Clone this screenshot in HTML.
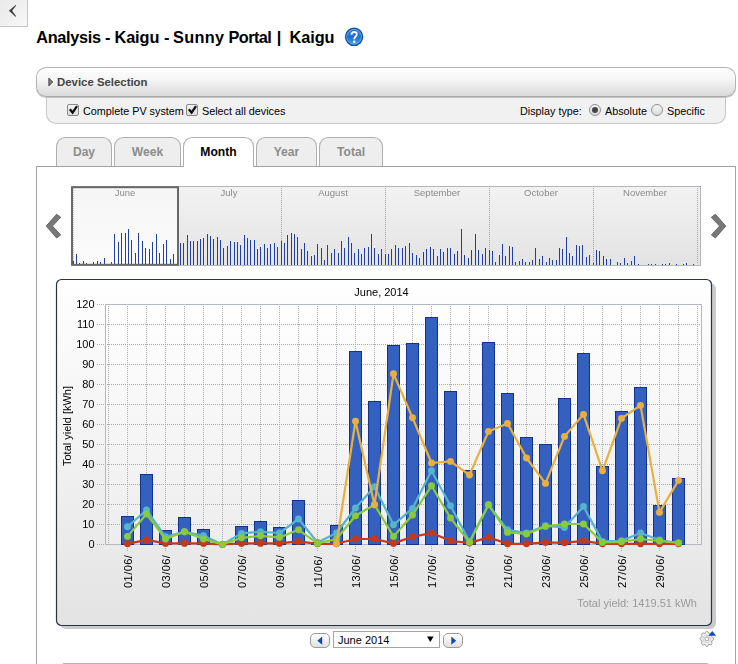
<!DOCTYPE html>
<html><head><meta charset="utf-8"><title>Analysis - Kaigu - Sunny Portal | Kaigu</title>
<style>
html,body{margin:0;padding:0;background:#fff;}
body{width:738px;height:664px;position:relative;overflow:hidden;font-family:"Liberation Sans",sans-serif;font-size:11px;color:#000;}
.abs{position:absolute;}
#back{left:0;top:0;width:27px;height:26px;background:linear-gradient(135deg,#e9e9e9,#f0f0f0 50%,#f9f9f9);border-right:1px solid #c4c4c4;border-bottom:1px solid #c4c4c4;}
#title{left:36px;top:27px;font-size:16.3px;font-weight:bold;line-height:20px;white-space:nowrap;color:#000;width:320px;height:20px;}
#title span{position:absolute;top:0;}
#devsel{left:36px;top:67px;width:698px;height:28px;border:1px solid #b4b4b4;border-bottom:1px solid #a9a9a9;border-radius:10px;background:linear-gradient(#ffffff,#f6f6f6 40%,#dadada);box-sizing:content-box;box-shadow:0 1px 0 #c4c4c4;z-index:2;}
#devsel span{position:absolute;left:20px;top:7.5px;font-weight:bold;color:#444;font-size:11.4px;line-height:13px;white-space:nowrap;}
#opts{left:46px;top:96px;width:678px;height:27px;border:1px solid #c6c6c6;border-top:none;border-radius:0 0 10px 10px;background:#f1f1f1;}
.lbl{position:absolute;top:104px;line-height:14px;white-space:nowrap;font-size:10.8px;}
.cb{position:absolute;top:104px;width:9.5px;height:9.5px;border:1px solid #8a8a8a;border-radius:2px;background:linear-gradient(#f4f4f4,#dedede);}
.rb{position:absolute;top:104px;width:10px;height:10px;border:1px solid #8f8f8f;border-radius:6px;background:linear-gradient(#f6f6f6,#dadada);}
.tab{position:absolute;top:137px;height:29px;border:1px solid #aeaeae;border-bottom:none;border-radius:9.5px 9.5px 0 0;background:#eeeeee;color:#8c8c8c;font-weight:bold;font-size:12.1px;text-align:center;line-height:28px;box-sizing:border-box;}
.tab.act{background:#fff;color:#000;height:30px;z-index:3;}
#panel{left:36px;top:166px;width:698px;height:520px;border:1px solid #a2a2a2;background:#fff;}
#hr{left:63px;top:663px;width:645px;height:1px;background:#b5b5b5;}
.nbtn{position:absolute;top:633px;width:17.5px;height:12.5px;border:1px solid #9a9a9a;border-radius:5px;background:linear-gradient(#ffffff,#e0e0e0);}
#msel{left:333px;top:631px;width:105px;height:15px;border:1px solid #a5a5a5;background:#fff;line-height:14px;font-size:11px;}
</style></head><body>
<div id="back" class="abs"><svg width="27" height="26" style="position:absolute;left:0;top:0"><path d="M8.9 10.8 L15.6 4.9 L16.2 5.4 L12.1 10.8 L16.2 16.3 L15.6 16.8 Z" fill="#3c3c3c"/></svg></div>
<div id="title" class="abs"><span style="left:0.3px;letter-spacing:-0.32px">Analysis</span><span style="left:69px">-</span><span style="left:78.5px;letter-spacing:-0.1px">Kaigu</span><span style="left:128px">-</span><span style="left:137px;letter-spacing:0.32px">Sunny</span><span style="left:192.5px;letter-spacing:-0.55px">Portal</span><span style="left:240.7px">|</span><span style="left:253.5px;letter-spacing:-0.05px">Kaigu</span></div>
<svg class="abs" style="left:344px;top:27px" width="20" height="20"><defs><linearGradient id="gh" x1="0" y1="0" x2="0" y2="1"><stop offset="0" stop-color="#3f8fdc"/><stop offset="0.5" stop-color="#1c70ca"/><stop offset="1" stop-color="#4fa2ea"/></linearGradient></defs><circle cx="10.1" cy="9.85" r="8.5" fill="url(#gh)" stroke="#1454ac" stroke-width="1.5"/><circle cx="10.1" cy="9.85" r="7.4" fill="none" stroke="#8bbcf0" stroke-width="0.7" opacity="0.8"/><path d="M7.5 7.1 C7.5 5.1 8.7 4.2 10.1 4.2 C11.7 4.2 12.8 5.2 12.8 6.6 C12.8 8.9 10.2 8.7 10.2 11.6" fill="none" stroke="#0f4a9c" stroke-width="1.8" opacity="0.55"/><path d="M7.5 7.8 C7.5 5.8 8.7 4.9 10.1 4.9 C11.7 4.9 12.8 5.9 12.8 7.3 C12.8 9.6 10.2 9.4 10.2 12.3" fill="none" stroke="#fff" stroke-width="1.8"/><circle cx="10.2" cy="14.8" r="1.2" fill="#fff"/></svg>
<div id="devsel" class="abs"><svg width="8" height="12" style="position:absolute;left:11px;top:9px"><path d="M0.8 1 L4.8 5 L0.8 9 Z" fill="#777" stroke="#444" stroke-width="0.8"/></svg><span>Device Selection</span></div>
<div id="opts" class="abs"></div>
<div class="cb" style="left:67px"></div><div class="lbl" style="left:83px">Complete PV system</div>
<div class="cb" style="left:186px"></div><div class="lbl" style="left:202px">Select all devices</div>
<svg class="abs" style="left:66px;top:102px" width="140" height="16"><path d="M3.8 7.3 L6.6 10.6 L11 4.2" fill="none" stroke="#111" stroke-width="2.3"/><path d="M122.8 7.3 L125.6 10.6 L130 4.2" fill="none" stroke="#111" stroke-width="2.3"/></svg>
<div class="lbl" style="left:520px">Display type:</div>
<div class="rb" style="left:589px"></div><div class="abs" style="left:592px;top:107px;width:6px;height:6px;border-radius:3px;background:#444"></div>
<div class="lbl" style="left:605px">Absolute</div>
<div class="rb" style="left:651px"></div>
<div class="lbl" style="left:667px">Specific</div>
<div id="panel" class="abs"></div>
<div class="tab" style="left:56px;width:56px">Day</div>
<div class="tab" style="left:114px;width:67px">Week</div>
<div class="tab act" style="left:183px;width:71px">Month</div>
<div class="tab" style="left:256px;width:61px">Year</div>
<div class="tab" style="left:319px;width:64px">Total</div>
<svg class="abs" style="left:0;top:0;z-index:5;will-change:transform" width="738" height="664" font-family="Liberation Sans, sans-serif">
<defs><linearGradient id="gtl" x1="0" y1="0" x2="0" y2="1"><stop offset="0" stop-color="#f2f2f2"/><stop offset="1" stop-color="#e3e3e3"/></linearGradient><linearGradient id="gsel" x1="0" y1="0" x2="0" y2="1"><stop offset="0" stop-color="#f6f6f6"/><stop offset="1" stop-color="#fbfbfb"/></linearGradient><linearGradient id="gpanel" x1="0" y1="0" x2="0" y2="1"><stop offset="0" stop-color="#ffffff"/><stop offset="0.07" stop-color="#fdfdfd"/><stop offset="0.5" stop-color="#f2f2f2"/><stop offset="1" stop-color="#e3e3e3"/></linearGradient><linearGradient id="gplot" x1="0" y1="0" x2="0" y2="1"><stop offset="0" stop-color="#ffffff"/><stop offset="1" stop-color="#ededed"/></linearGradient></defs>
<rect x="72.5" y="186.5" width="628" height="79" fill="url(#gtl)" stroke="#b2b6bb" stroke-width="1"/>
<rect x="72" y="187" width="107" height="78" fill="url(#gsel)"/>
<text x="125" y="196" font-size="9.5" fill="#8a8a8a" text-anchor="middle">June</text>
<line x1="177.5" y1="188" x2="177.5" y2="264" stroke="#a6a6a6" stroke-width="1" stroke-dasharray="1,1" shape-rendering="crispEdges"/>
<text x="229" y="196" font-size="9.5" fill="#8a8a8a" text-anchor="middle">July</text>
<line x1="281.5" y1="188" x2="281.5" y2="264" stroke="#a6a6a6" stroke-width="1" stroke-dasharray="1,1" shape-rendering="crispEdges"/>
<text x="333" y="196" font-size="9.5" fill="#8a8a8a" text-anchor="middle">August</text>
<line x1="385.5" y1="188" x2="385.5" y2="264" stroke="#a6a6a6" stroke-width="1" stroke-dasharray="1,1" shape-rendering="crispEdges"/>
<text x="437" y="196" font-size="9.5" fill="#8a8a8a" text-anchor="middle">September</text>
<line x1="489.5" y1="188" x2="489.5" y2="264" stroke="#a6a6a6" stroke-width="1" stroke-dasharray="1,1" shape-rendering="crispEdges"/>
<text x="541" y="196" font-size="9.5" fill="#8a8a8a" text-anchor="middle">October</text>
<line x1="593.5" y1="188" x2="593.5" y2="264" stroke="#a6a6a6" stroke-width="1" stroke-dasharray="1,1" shape-rendering="crispEdges"/>
<text x="645" y="196" font-size="9.5" fill="#8a8a8a" text-anchor="middle">November</text>
<line x1="697.5" y1="188" x2="697.5" y2="264" stroke="#a6a6a6" stroke-width="1" stroke-dasharray="1,1" shape-rendering="crispEdges"/>
<line x1="73.5" y1="188" x2="73.5" y2="264" stroke="#c4c8cc" stroke-width="1" stroke-dasharray="1,1" shape-rendering="crispEdges"/>
<path d="M73.5 265v-4M76.5 265v-11M79.5 265v-2M83.5 265v-4M86.5 265v-2M93.5 265v-3M97.5 265v-4M100.5 265v-3M104.5 265v-7M107.5 265v-1M111.5 265v-3M114.5 265v-31M118.5 265v-23M121.5 265v-32M125.5 265v-32M128.5 265v-36M131.5 265v-25M135.5 265v-12M138.5 265v-32M142.5 265v-24M145.5 265v-17M149.5 265v-16M152.5 265v-23M156.5 265v-31M159.5 265v-12M163.5 265v-21M166.5 265v-25M170.5 265v-6M173.5 265v-11M177.5 265v-22M180.5 265v-22M183.5 265v-22M187.5 265v-30M190.5 265v-24M193.5 265v-24M197.5 265v-24M200.5 265v-26M203.5 265v-27M207.5 265v-31M210.5 265v-29M213.5 265v-26M217.5 265v-28M220.5 265v-25M223.5 265v-17M227.5 265v-19M230.5 265v-24M234.5 265v-23M237.5 265v-23M240.5 265v-20M244.5 265v-30M247.5 265v-27M250.5 265v-25M254.5 265v-25M257.5 265v-16M260.5 265v-18M264.5 265v-21M267.5 265v-17M270.5 265v-21M274.5 265v-22M277.5 265v-18M281.5 265v-24M284.5 265v-22M287.5 265v-30M291.5 265v-32M294.5 265v-31M297.5 265v-28M301.5 265v-16M304.5 265v-22M307.5 265v-14M311.5 265v-9M314.5 265v-10M317.5 265v-21M321.5 265v-17M324.5 265v-5M327.5 265v-20M331.5 265v-12M334.5 265v-16M338.5 265v-12M341.5 265v-24M344.5 265v-17M348.5 265v-28M351.5 265v-22M354.5 265v-12M358.5 265v-16M361.5 265v-11M364.5 265v-17M368.5 265v-18M371.5 265v-31M374.5 265v-17M378.5 265v-11M381.5 265v-16M385.5 265v-11M388.5 265v-11M391.5 265v-16M395.5 265v-20M398.5 265v-17M402.5 265v-17M405.5 265v-19M409.5 265v-22M412.5 265v-12M416.5 265v-10M419.5 265v-7M423.5 265v-13M426.5 265v-16M430.5 265v-18M433.5 265v-16M437.5 265v-9M440.5 265v-16M443.5 265v-13M447.5 265v-17M450.5 265v-17M454.5 265v-11M457.5 265v-14M461.5 265v-36M464.5 265v-10M468.5 265v-7M471.5 265v-15M475.5 265v-31M478.5 265v-15M482.5 265v-11M485.5 265v-17M489.5 265v-15M492.5 265v-14M495.5 265v-3M499.5 265v-10M502.5 265v-21M505.5 265v-9M509.5 265v-19M512.5 265v-18M515.5 265v-3M519.5 265v-4M522.5 265v-6M525.5 265v-3M529.5 265v-3M532.5 265v-5M535.5 265v-17M539.5 265v-6M542.5 265v-9M546.5 265v-3M549.5 265v-7M552.5 265v-5M556.5 265v-5M559.5 265v-17M562.5 265v-16M566.5 265v-28M569.5 265v-12M572.5 265v-9M576.5 265v-20M579.5 265v-19M582.5 265v-20M586.5 265v-8M589.5 265v-10M593.5 265v-2M596.5 265v-15M599.5 265v-14M603.5 265v-9M606.5 265v-6M610.5 265v-6M617.5 265v-3M620.5 265v-2M624.5 265v-7M627.5 265v-2M631.5 265v-4M634.5 265v-9M638.5 265v-1M648.5 265v-1M651.5 265v-1M655.5 265v-1M662.5 265v-1M665.5 265v-1M669.5 265v-2M676.5 265v-1M683.5 265v-1M686.5 265v-2M693.5 265v-1" stroke="#1f3fa6" stroke-width="1" fill="none" shape-rendering="crispEdges"/>
<rect x="72" y="187.2" width="106" height="77.6" fill="none" stroke="#686868" stroke-width="2"/>
<path d="M46.2 226.1 L56.6 214.2 L60.7 217.3 L52.4 226.1 L60.7 234.9 L56.6 238 Z" fill="#787878" stroke="#555" stroke-width="0.8"/>
<path d="M725.8 226.1 L715.4 214.2 L711.3 217.3 L719.6 226.1 L711.3 234.9 L715.4 238 Z" fill="#787878" stroke="#555" stroke-width="0.8"/>
<rect x="60" y="283" width="656" height="346" rx="6" fill="#cbcbcb"/>
<rect x="56.5" y="279.5" width="655" height="346" rx="5" fill="url(#gpanel)" stroke="#263442" stroke-width="1.2"/>
<text x="381.5" y="296" font-size="11" fill="#000" text-anchor="middle">June, 2014</text>
<rect x="105.5" y="304.5" width="596" height="240" fill="url(#gplot)" stroke="#b4b8c0" stroke-width="1"/>
<path d="M97 544.5H104M97 524.5H104M107 524.5H701M97 504.5H104M107 504.5H701M97 484.5H104M107 484.5H701M97 464.5H104M107 464.5H701M97 444.5H104M107 444.5H701M97 424.5H104M107 424.5H701M97 404.5H104M107 404.5H701M97 384.5H104M107 384.5H701M97 364.5H104M107 364.5H701M97 344.5H104M107 344.5H701M97 324.5H104M107 324.5H701M97 304.5H104M108.5 306V544M127.5 306V544M146.5 306V544M165.5 306V544M184.5 306V544M203.5 306V544M222.5 306V544M241.5 306V544M260.5 306V544M279.5 306V544M298.5 306V544M317.5 306V544M336.5 306V544M355.5 306V544M374.5 306V544M393.5 306V544M412.5 306V544M431.5 306V544M450.5 306V544M469.5 306V544M488.5 306V544M507.5 306V544M526.5 306V544M545.5 306V544M564.5 306V544M583.5 306V544M602.5 306V544M621.5 306V544M640.5 306V544M659.5 306V544M678.5 306V544M697.5 306V544" stroke="#a8abb2" stroke-width="1" fill="none" stroke-dasharray="1,1" shape-rendering="crispEdges"/>
<text x="94.5" y="548" font-size="11" fill="#000" text-anchor="end">0</text>
<text x="94.5" y="528" font-size="11" fill="#000" text-anchor="end">10</text>
<text x="94.5" y="508" font-size="11" fill="#000" text-anchor="end">20</text>
<text x="94.5" y="488" font-size="11" fill="#000" text-anchor="end">30</text>
<text x="94.5" y="468" font-size="11" fill="#000" text-anchor="end">40</text>
<text x="94.5" y="448" font-size="11" fill="#000" text-anchor="end">50</text>
<text x="94.5" y="428" font-size="11" fill="#000" text-anchor="end">60</text>
<text x="94.5" y="408" font-size="11" fill="#000" text-anchor="end">70</text>
<text x="94.5" y="388" font-size="11" fill="#000" text-anchor="end">80</text>
<text x="94.5" y="368" font-size="11" fill="#000" text-anchor="end">90</text>
<text x="94.5" y="348" font-size="11" fill="#000" text-anchor="end">100</text>
<text x="94.5" y="328" font-size="11" fill="#000" text-anchor="end">110</text>
<text x="94.5" y="308" font-size="11" fill="#000" text-anchor="end">120</text>
<text transform="translate(71,426) rotate(-90)" font-size="11" fill="#000" text-anchor="middle">Total yield [kWh]</text>
<rect x="121.5" y="516.5" width="12" height="28" fill="#3461bf" stroke="#13318f" stroke-width="1"/>
<rect x="140.5" y="474.5" width="12" height="70" fill="#3461bf" stroke="#13318f" stroke-width="1"/>
<rect x="159.5" y="530.5" width="12" height="14" fill="#3461bf" stroke="#13318f" stroke-width="1"/>
<rect x="178.5" y="517.5" width="12" height="27" fill="#3461bf" stroke="#13318f" stroke-width="1"/>
<rect x="197.5" y="529.5" width="12" height="15" fill="#3461bf" stroke="#13318f" stroke-width="1"/>
<rect x="235.5" y="526.5" width="12" height="18" fill="#3461bf" stroke="#13318f" stroke-width="1"/>
<rect x="254.5" y="521.5" width="12" height="23" fill="#3461bf" stroke="#13318f" stroke-width="1"/>
<rect x="273.5" y="527.5" width="12" height="17" fill="#3461bf" stroke="#13318f" stroke-width="1"/>
<rect x="292.5" y="500.5" width="12" height="44" fill="#3461bf" stroke="#13318f" stroke-width="1"/>
<rect x="311.5" y="542.5" width="12" height="2" fill="#3461bf" stroke="#13318f" stroke-width="1"/>
<rect x="330.5" y="525.5" width="12" height="19" fill="#3461bf" stroke="#13318f" stroke-width="1"/>
<rect x="349.5" y="351.5" width="12" height="193" fill="#3461bf" stroke="#13318f" stroke-width="1"/>
<rect x="368.5" y="401.5" width="12" height="143" fill="#3461bf" stroke="#13318f" stroke-width="1"/>
<rect x="387.5" y="345.5" width="12" height="199" fill="#3461bf" stroke="#13318f" stroke-width="1"/>
<rect x="406.5" y="343.5" width="12" height="201" fill="#3461bf" stroke="#13318f" stroke-width="1"/>
<rect x="425.5" y="317.5" width="12" height="227" fill="#3461bf" stroke="#13318f" stroke-width="1"/>
<rect x="444.5" y="391.5" width="12" height="153" fill="#3461bf" stroke="#13318f" stroke-width="1"/>
<rect x="463.5" y="470.5" width="12" height="74" fill="#3461bf" stroke="#13318f" stroke-width="1"/>
<rect x="482.5" y="342.5" width="12" height="202" fill="#3461bf" stroke="#13318f" stroke-width="1"/>
<rect x="501.5" y="393.5" width="12" height="151" fill="#3461bf" stroke="#13318f" stroke-width="1"/>
<rect x="520.5" y="437.5" width="12" height="107" fill="#3461bf" stroke="#13318f" stroke-width="1"/>
<rect x="539.5" y="444.5" width="12" height="100" fill="#3461bf" stroke="#13318f" stroke-width="1"/>
<rect x="558.5" y="398.5" width="12" height="146" fill="#3461bf" stroke="#13318f" stroke-width="1"/>
<rect x="577.5" y="353.5" width="12" height="191" fill="#3461bf" stroke="#13318f" stroke-width="1"/>
<rect x="596.5" y="466.5" width="12" height="78" fill="#3461bf" stroke="#13318f" stroke-width="1"/>
<rect x="615.5" y="411.5" width="12" height="133" fill="#3461bf" stroke="#13318f" stroke-width="1"/>
<rect x="634.5" y="387.5" width="12" height="157" fill="#3461bf" stroke="#13318f" stroke-width="1"/>
<rect x="653.5" y="505.5" width="12" height="39" fill="#3461bf" stroke="#13318f" stroke-width="1"/>
<rect x="672.5" y="478.5" width="12" height="66" fill="#3461bf" stroke="#13318f" stroke-width="1"/>
<path d="M127.5 546V552M165.5 546V552M203.5 546V552M241.5 546V552M279.5 546V552M317.5 546V552M355.5 546V552M393.5 546V552M431.5 546V552M469.5 546V552M507.5 546V552M545.5 546V552M583.5 546V552M621.5 546V552M659.5 546V552" stroke="#a8abb2" stroke-width="1" fill="none" stroke-dasharray="1,1" shape-rendering="crispEdges"/>
<text transform="translate(131.5,588) rotate(-90)" font-size="11.2" letter-spacing="0.36" fill="#000">01/06/</text>
<text transform="translate(169.5,588) rotate(-90)" font-size="11.2" letter-spacing="0.36" fill="#000">03/06/</text>
<text transform="translate(207.5,588) rotate(-90)" font-size="11.2" letter-spacing="0.36" fill="#000">05/06/</text>
<text transform="translate(245.5,588) rotate(-90)" font-size="11.2" letter-spacing="0.36" fill="#000">07/06/</text>
<text transform="translate(283.5,588) rotate(-90)" font-size="11.2" letter-spacing="0.36" fill="#000">09/06/</text>
<text transform="translate(321.5,588) rotate(-90)" font-size="11.2" letter-spacing="0.36" fill="#000">11/06/</text>
<text transform="translate(359.5,588) rotate(-90)" font-size="11.2" letter-spacing="0.36" fill="#000">13/06/</text>
<text transform="translate(397.5,588) rotate(-90)" font-size="11.2" letter-spacing="0.36" fill="#000">15/06/</text>
<text transform="translate(435.5,588) rotate(-90)" font-size="11.2" letter-spacing="0.36" fill="#000">17/06/</text>
<text transform="translate(473.5,588) rotate(-90)" font-size="11.2" letter-spacing="0.36" fill="#000">19/06/</text>
<text transform="translate(511.5,588) rotate(-90)" font-size="11.2" letter-spacing="0.36" fill="#000">21/06/</text>
<text transform="translate(549.5,588) rotate(-90)" font-size="11.2" letter-spacing="0.36" fill="#000">23/06/</text>
<text transform="translate(587.5,588) rotate(-90)" font-size="11.2" letter-spacing="0.36" fill="#000">25/06/</text>
<text transform="translate(625.5,588) rotate(-90)" font-size="11.2" letter-spacing="0.36" fill="#000">27/06/</text>
<text transform="translate(663.5,588) rotate(-90)" font-size="11.2" letter-spacing="0.36" fill="#000">29/06/</text>
<polyline points="127.5,526.8 146.5,510 165.5,536.8 184.5,531.8 203.5,535.8 222.5,544.4 241.5,533.4 260.5,531.8 279.5,533 298.5,519 317.5,542.4 336.5,533 355.5,508 374.5,486.8 393.5,524.8 412.5,508.4 431.5,470.8 450.5,505.8 469.5,541.4 488.5,504.8 507.5,529.8 526.5,533 545.5,525.8 564.5,527.4 583.5,506.4 602.5,541.4 621.5,540.8 640.5,533 659.5,540 678.5,543" fill="none" stroke="#56b4cc" stroke-width="2.2" stroke-linejoin="round"/>
<g fill="#56b4cc"><circle cx="127.5" cy="526.8" r="3.45"/><circle cx="146.5" cy="510" r="3.45"/><circle cx="165.5" cy="536.8" r="3.45"/><circle cx="184.5" cy="531.8" r="3.45"/><circle cx="203.5" cy="535.8" r="3.45"/><circle cx="222.5" cy="544.4" r="3.45"/><circle cx="241.5" cy="533.4" r="3.45"/><circle cx="260.5" cy="531.8" r="3.45"/><circle cx="279.5" cy="533" r="3.45"/><circle cx="298.5" cy="519" r="3.45"/><circle cx="317.5" cy="542.4" r="3.45"/><circle cx="336.5" cy="533" r="3.45"/><circle cx="355.5" cy="508" r="3.45"/><circle cx="374.5" cy="486.8" r="3.45"/><circle cx="393.5" cy="524.8" r="3.45"/><circle cx="412.5" cy="508.4" r="3.45"/><circle cx="431.5" cy="470.8" r="3.45"/><circle cx="450.5" cy="505.8" r="3.45"/><circle cx="469.5" cy="541.4" r="3.45"/><circle cx="488.5" cy="504.8" r="3.45"/><circle cx="507.5" cy="529.8" r="3.45"/><circle cx="526.5" cy="533" r="3.45"/><circle cx="545.5" cy="525.8" r="3.45"/><circle cx="564.5" cy="527.4" r="3.45"/><circle cx="583.5" cy="506.4" r="3.45"/><circle cx="602.5" cy="541.4" r="3.45"/><circle cx="621.5" cy="540.8" r="3.45"/><circle cx="640.5" cy="533" r="3.45"/><circle cx="659.5" cy="540" r="3.45"/><circle cx="678.5" cy="543" r="3.45"/></g>
<polyline points="127.5,543.8 146.5,539.8 165.5,543.4 184.5,543.4 203.5,543.4 222.5,544.4 241.5,543.4 260.5,543.4 279.5,543.4 298.5,541.4 317.5,543.8 336.5,543.8 355.5,539 374.5,539 393.5,543.4 412.5,536.8 431.5,533 450.5,540.8 469.5,543 488.5,537.4 507.5,543.8 526.5,543.8 545.5,542.4 564.5,542.8 583.5,540.8 602.5,543.8 621.5,543.8 640.5,543.8 659.5,543.8 678.5,543.8" fill="none" stroke="#c3391a" stroke-width="2.2" stroke-linejoin="round"/>
<g fill="#c3391a"><circle cx="127.5" cy="543.8" r="3.45"/><circle cx="146.5" cy="539.8" r="3.45"/><circle cx="165.5" cy="543.4" r="3.45"/><circle cx="184.5" cy="543.4" r="3.45"/><circle cx="203.5" cy="543.4" r="3.45"/><circle cx="222.5" cy="544.4" r="3.45"/><circle cx="241.5" cy="543.4" r="3.45"/><circle cx="260.5" cy="543.4" r="3.45"/><circle cx="279.5" cy="543.4" r="3.45"/><circle cx="298.5" cy="541.4" r="3.45"/><circle cx="317.5" cy="543.8" r="3.45"/><circle cx="336.5" cy="543.8" r="3.45"/><circle cx="355.5" cy="539" r="3.45"/><circle cx="374.5" cy="539" r="3.45"/><circle cx="393.5" cy="543.4" r="3.45"/><circle cx="412.5" cy="536.8" r="3.45"/><circle cx="431.5" cy="533" r="3.45"/><circle cx="450.5" cy="540.8" r="3.45"/><circle cx="469.5" cy="543" r="3.45"/><circle cx="488.5" cy="537.4" r="3.45"/><circle cx="507.5" cy="543.8" r="3.45"/><circle cx="526.5" cy="543.8" r="3.45"/><circle cx="545.5" cy="542.4" r="3.45"/><circle cx="564.5" cy="542.8" r="3.45"/><circle cx="583.5" cy="540.8" r="3.45"/><circle cx="602.5" cy="543.8" r="3.45"/><circle cx="621.5" cy="543.8" r="3.45"/><circle cx="640.5" cy="543.8" r="3.45"/><circle cx="659.5" cy="543.8" r="3.45"/><circle cx="678.5" cy="543.8" r="3.45"/></g>
<polyline points="127.5,536.4 146.5,514 165.5,539 184.5,531.8 203.5,539 222.5,544.4 241.5,537.8 260.5,535.8 279.5,537.4 298.5,529.8 317.5,543.4 336.5,539 355.5,515.8 374.5,504.8 393.5,536.4 412.5,515 431.5,485.8 450.5,518 469.5,542.4 488.5,504.8 507.5,532.4 526.5,534 545.5,526.4 564.5,524 583.5,524 602.5,542.4 621.5,541.8 640.5,539 659.5,541 678.5,543" fill="none" stroke="#8acb3a" stroke-width="2.2" stroke-linejoin="round"/>
<g fill="#8acb3a"><circle cx="127.5" cy="536.4" r="3.45"/><circle cx="146.5" cy="514" r="3.45"/><circle cx="165.5" cy="539" r="3.45"/><circle cx="184.5" cy="531.8" r="3.45"/><circle cx="203.5" cy="539" r="3.45"/><circle cx="222.5" cy="544.4" r="3.45"/><circle cx="241.5" cy="537.8" r="3.45"/><circle cx="260.5" cy="535.8" r="3.45"/><circle cx="279.5" cy="537.4" r="3.45"/><circle cx="298.5" cy="529.8" r="3.45"/><circle cx="317.5" cy="543.4" r="3.45"/><circle cx="336.5" cy="539" r="3.45"/><circle cx="355.5" cy="515.8" r="3.45"/><circle cx="374.5" cy="504.8" r="3.45"/><circle cx="393.5" cy="536.4" r="3.45"/><circle cx="412.5" cy="515" r="3.45"/><circle cx="431.5" cy="485.8" r="3.45"/><circle cx="450.5" cy="518" r="3.45"/><circle cx="469.5" cy="542.4" r="3.45"/><circle cx="488.5" cy="504.8" r="3.45"/><circle cx="507.5" cy="532.4" r="3.45"/><circle cx="526.5" cy="534" r="3.45"/><circle cx="545.5" cy="526.4" r="3.45"/><circle cx="564.5" cy="524" r="3.45"/><circle cx="583.5" cy="524" r="3.45"/><circle cx="602.5" cy="542.4" r="3.45"/><circle cx="621.5" cy="541.8" r="3.45"/><circle cx="640.5" cy="539" r="3.45"/><circle cx="659.5" cy="541" r="3.45"/><circle cx="678.5" cy="543" r="3.45"/></g>
<polyline points="336.5,543.8 355.5,421.2 374.5,504.8 393.5,373.8 412.5,417.8 431.5,463 450.5,461.4 469.5,475 488.5,431.4 507.5,423.4 526.5,458 545.5,483.4 564.5,436.4 583.5,414.4 602.5,470.8 621.5,418.4 640.5,405.4 659.5,512.4 678.5,480.4" fill="none" stroke="#e9b03f" stroke-width="2.2" stroke-linejoin="round"/>
<g fill="#e9b03f"><circle cx="336.5" cy="543.8" r="3.45"/><circle cx="355.5" cy="421.2" r="3.45"/><circle cx="374.5" cy="504.8" r="3.45"/><circle cx="393.5" cy="373.8" r="3.45"/><circle cx="412.5" cy="417.8" r="3.45"/><circle cx="431.5" cy="463" r="3.45"/><circle cx="450.5" cy="461.4" r="3.45"/><circle cx="469.5" cy="475" r="3.45"/><circle cx="488.5" cy="431.4" r="3.45"/><circle cx="507.5" cy="423.4" r="3.45"/><circle cx="526.5" cy="458" r="3.45"/><circle cx="545.5" cy="483.4" r="3.45"/><circle cx="564.5" cy="436.4" r="3.45"/><circle cx="583.5" cy="414.4" r="3.45"/><circle cx="602.5" cy="470.8" r="3.45"/><circle cx="621.5" cy="418.4" r="3.45"/><circle cx="640.5" cy="405.4" r="3.45"/><circle cx="659.5" cy="512.4" r="3.45"/><circle cx="678.5" cy="480.4" r="3.45"/></g>
<text x="697" y="606.5" font-size="11" fill="#9a9a9a" text-anchor="end">Total yield: 1419.51 kWh</text>
</svg>
<div class="nbtn" style="left:310px"><svg width="18" height="13" style="position:absolute;left:0;top:0"><path d="M11.2 2.6 L6.3 6.7 L11.2 10.8 Z" fill="#1a45b0"/></svg></div>
<div id="msel" class="abs" style="z-index:6"><span style="position:absolute;left:4px;top:0.8px">June 2014</span><svg width="10" height="8" style="position:absolute;left:92px;top:4px"><path d="M1 0.4 H7.6 L4.3 6 Z" fill="#000"/></svg></div>
<div class="nbtn" style="left:443px"><svg width="18" height="13" style="position:absolute;left:0;top:0"><path d="M7.3 2.6 L12.2 6.7 L7.3 10.8 Z" fill="#1a45b0"/></svg></div>
<div id="hr" class="abs" style="z-index:6"></div>
<svg class="abs" style="left:698px;top:629px;z-index:6" width="20" height="20"><path d="M8.80 2.15 L10.03 2.90 L10.73 4.62 L12.30 3.96 L13.64 4.42 L14.04 5.93 L13.46 7.71 L14.98 8.51 L15.64 9.90 L14.98 11.29 L13.46 12.09 L14.04 13.87 L13.64 15.38 L12.30 15.84 L10.73 15.18 L10.03 16.90 L8.80 17.65 L7.57 16.90 L6.87 15.18 L5.30 15.84 L3.96 15.38 L3.56 13.87 L4.14 12.09 L2.62 11.29 L1.96 9.90 L2.62 8.51 L4.14 7.71 L3.56 5.93 L3.96 4.42 L5.30 3.96 L6.87 4.62 L7.57 2.90 Z" fill="#f1f1f1" stroke="#a2a2a2" stroke-width="1" stroke-linejoin="round"/><circle cx="8.8" cy="9.9" r="3.8" fill="none" stroke="#d4d4d4" stroke-width="1"/><circle cx="8.8" cy="9.9" r="2" fill="#fafafa" stroke="#a8a8a8" stroke-width="1"/><path d="M14.4 2.1 L10.3 6.7 L18.1 6.7 Z" fill="#0d4cc8"/></svg>
</body></html>
